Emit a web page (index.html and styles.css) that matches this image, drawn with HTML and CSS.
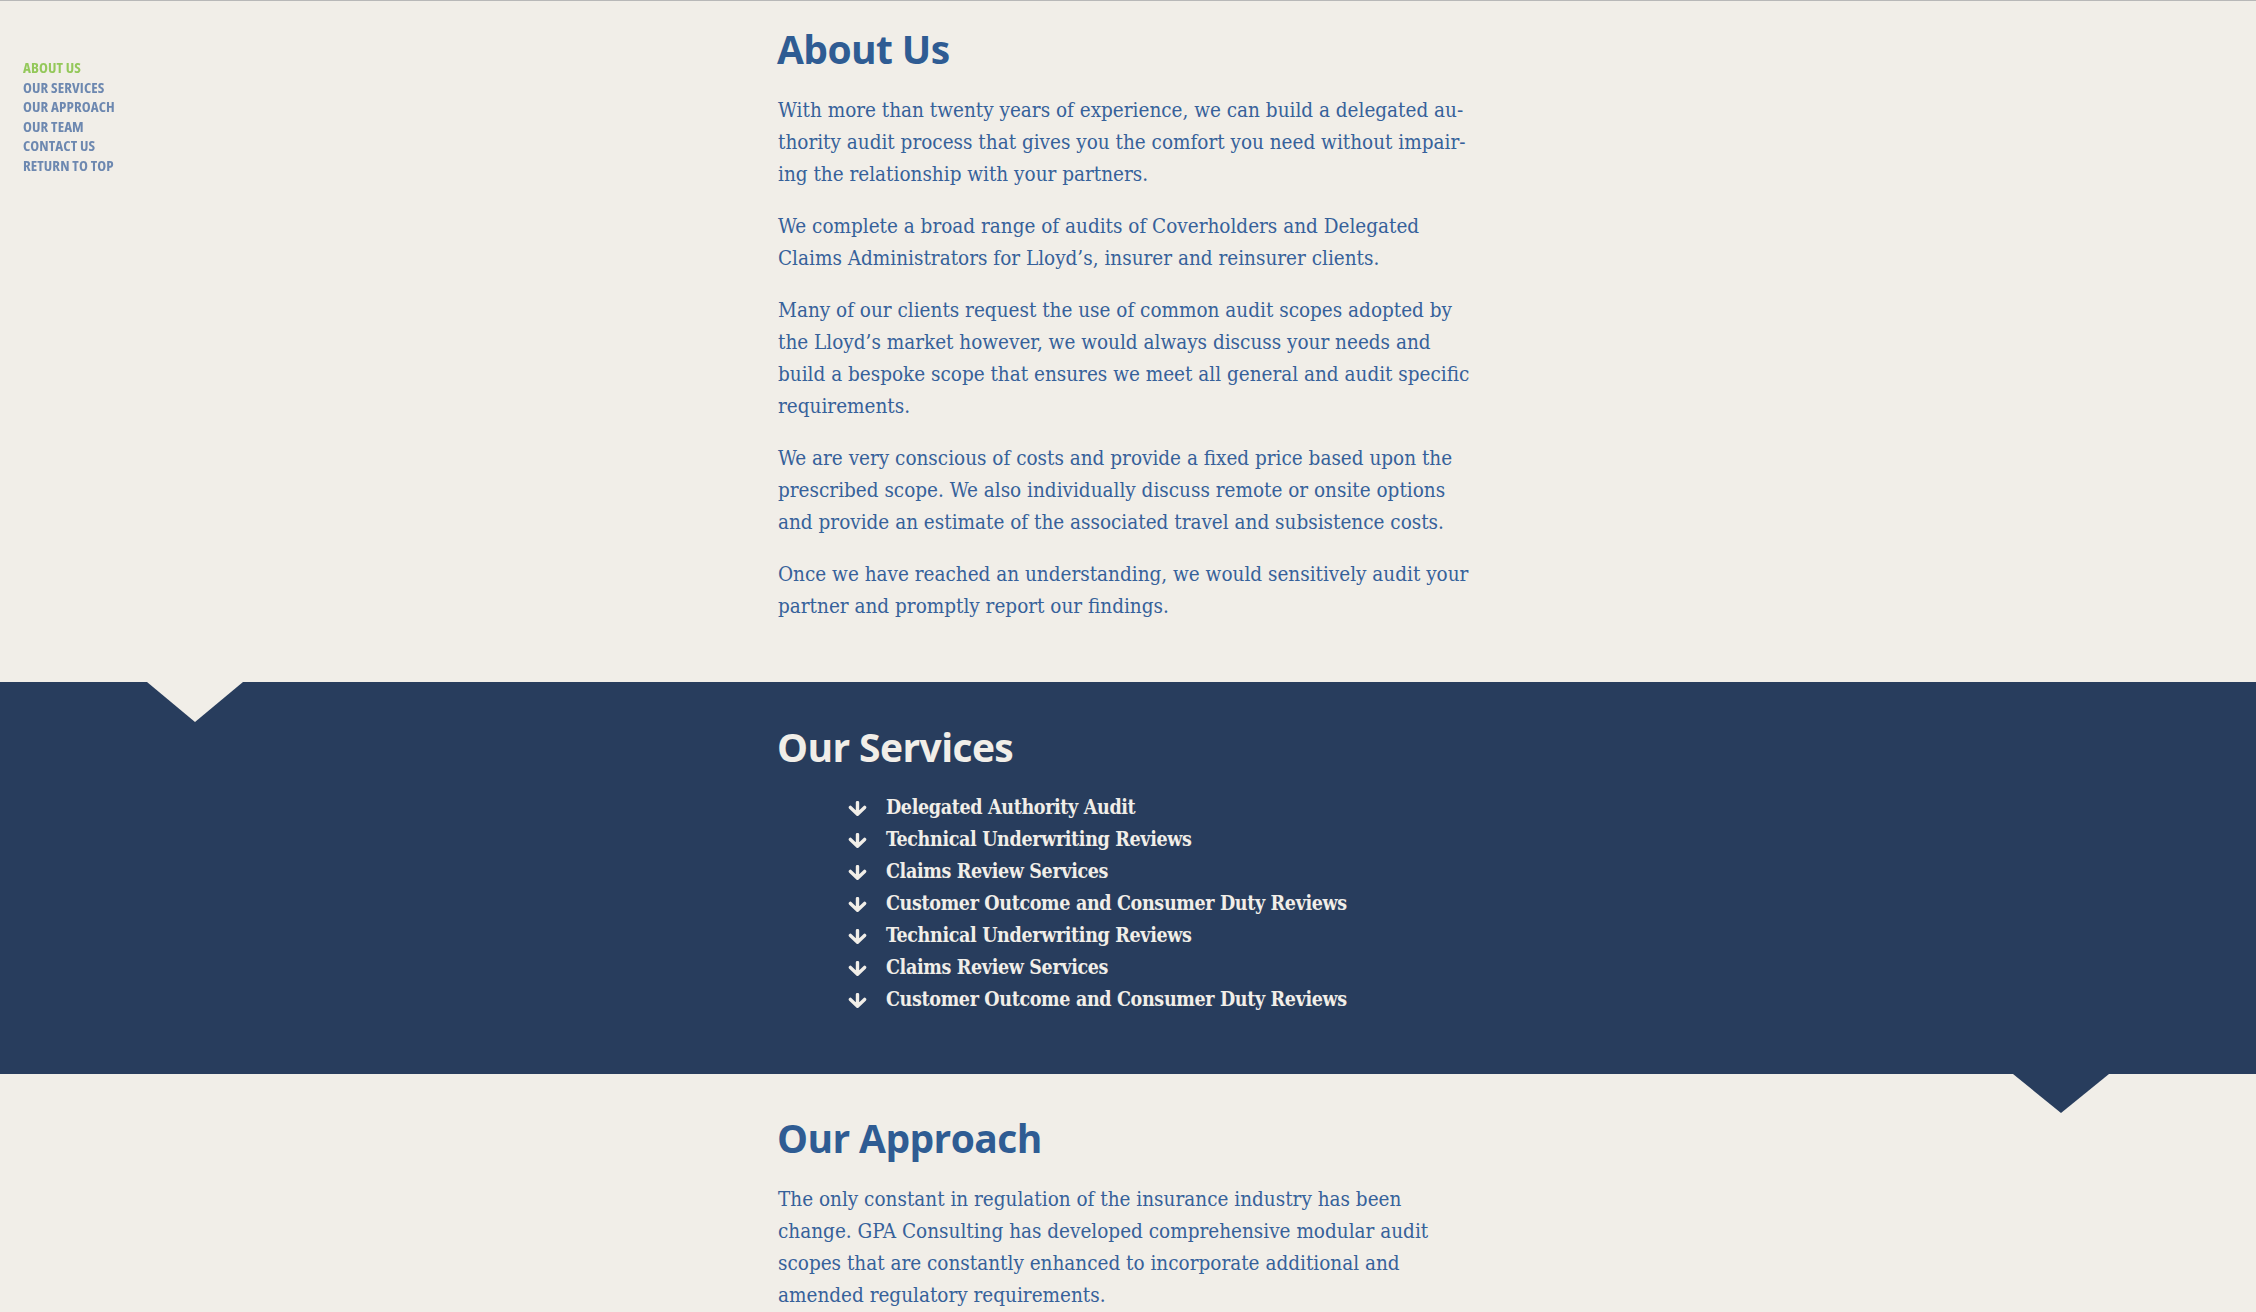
FILE: index.html
```html
<!DOCTYPE html>
<html lang="en">
<head>
<meta charset="utf-8">
<title>GPA Consulting</title>
<link rel="stylesheet" href="styles.css">
</head>
<body>
<nav class="side-nav">
  <a class="side-link active" href="#about">About Us</a>
  <a class="side-link" href="#services">Our Services</a>
  <a class="side-link" href="#approach">Our Approach</a>
  <a class="side-link" href="#team">Our Team</a>
  <a class="side-link" href="#contact">Contact Us</a>
  <a class="side-link" href="#top">Return to Top</a>
</nav>
<main>
  <section class="section about" id="about">
    <div class="inner">
      <h2 class="section-title">About Us</h2>
      <p class="copy">With more than twenty years of experience, we can build a delegated au-<br>thority audit process that gives you the comfort you need without impair-<br>ing the relationship with your partners.</p>
      <p class="copy">We complete a broad range of audits of Coverholders and Delegated<br>Claims Administrators for Lloyd’s, insurer and reinsurer clients.</p>
      <p class="copy">Many of our clients request the use of common audit scopes adopted by<br>the Lloyd’s market however, we would always discuss your needs and<br>build a bespoke scope that ensures we meet all general and audit specific<br>requirements.</p>
      <p class="copy">We are very conscious of costs and provide a fixed price based upon the<br>prescribed scope. We also individually discuss remote or onsite options<br>and provide an estimate of the associated travel and subsistence costs.</p>
      <p class="copy">Once we have reached an understanding, we would sensitively audit your<br>partner and promptly report our findings.</p>
    </div>
  </section>
  <section class="section services" id="services">
    <div class="inner">
      <h2 class="section-title">Our Services</h2>
      <ul class="service-list">
        <li class="service-item"><svg class="arrow" viewBox="0 0 19 15" aria-hidden="true"><path d="M9.5 1.6V13M2.4 6.4L9.5 13.2L16.6 6.4"/></svg><span>Delegated Authority Audit</span></li>
        <li class="service-item"><svg class="arrow" viewBox="0 0 19 15" aria-hidden="true"><path d="M9.5 1.6V13M2.4 6.4L9.5 13.2L16.6 6.4"/></svg><span>Technical Underwriting Reviews</span></li>
        <li class="service-item"><svg class="arrow" viewBox="0 0 19 15" aria-hidden="true"><path d="M9.5 1.6V13M2.4 6.4L9.5 13.2L16.6 6.4"/></svg><span>Claims Review Services</span></li>
        <li class="service-item"><svg class="arrow" viewBox="0 0 19 15" aria-hidden="true"><path d="M9.5 1.6V13M2.4 6.4L9.5 13.2L16.6 6.4"/></svg><span>Customer Outcome and Consumer Duty Reviews</span></li>
        <li class="service-item"><svg class="arrow" viewBox="0 0 19 15" aria-hidden="true"><path d="M9.5 1.6V13M2.4 6.4L9.5 13.2L16.6 6.4"/></svg><span>Technical Underwriting Reviews</span></li>
        <li class="service-item"><svg class="arrow" viewBox="0 0 19 15" aria-hidden="true"><path d="M9.5 1.6V13M2.4 6.4L9.5 13.2L16.6 6.4"/></svg><span>Claims Review Services</span></li>
        <li class="service-item"><svg class="arrow" viewBox="0 0 19 15" aria-hidden="true"><path d="M9.5 1.6V13M2.4 6.4L9.5 13.2L16.6 6.4"/></svg><span>Customer Outcome and Consumer Duty Reviews</span></li>
      </ul>
    </div>
  </section>
  <section class="section approach" id="approach">
    <div class="inner">
      <h2 class="section-title">Our Approach</h2>
      <p class="copy">The only constant in regulation of the insurance industry has been<br>change. GPA Consulting has developed comprehensive modular audit<br>scopes that are constantly enhanced to incorporate additional and<br>amended regulatory requirements.</p>
    </div>
  </section>
</main>
</body>
</html>
```

FILE: styles.css
```css
html, body {
  margin: 0;
  padding: 0;
}

body {
  background: #f1eee8;
  border-top: 1px solid #b8b8b8;
  font-family: "DejaVu Serif Condensed", "DejaVu Serif", serif;
  font-stretch: condensed;
  color: #36619a;
  overflow: hidden;
}

.side-nav {
  position: fixed;
  left: 23px;
  top: 58px;
  display: flex;
  flex-direction: column;
  z-index: 5;
}

.side-link {
  font-family: "Open Sans", "Liberation Sans Narrow", sans-serif;
  font-stretch: 75%;
  font-weight: 700;
  font-size: 15px;
  letter-spacing: 0.1px;
  line-height: 19.5px;
  text-transform: uppercase;
  text-decoration: none;
  color: #6d88b0;
}

.side-link.active {
  color: #94c85a;
}

.section {
  position: relative;
}

.inner {
  max-width: 700px;
  margin: 0 auto;
}

.section-title {
  margin: 0 0 21px -1px;
  font-family: "Open Sans", sans-serif;
  font-stretch: 100%;
  font-weight: 700;
  font-size: 39px;
  letter-spacing: -0.6px;
  line-height: 48px;
  color: #2f5c93;
}

.copy {
  margin: 0 0 20px;
  font-size: 20.5px;
  line-height: 32px;
  white-space: nowrap;
}

.copy:last-child {
  margin-bottom: 0;
}

.about {
  padding: 24px 0 60px;
}

.services {
  background: #283d5d;
  padding: 41px 0 58px;
}

.services .section-title {
  color: #f1eee8;
}

.services::before,
.services::after {
  content: "";
  position: absolute;
  width: 0;
  height: 0;
  border-left: 48px solid transparent;
  border-right: 48px solid transparent;
}

.services::before {
  left: 147px;
  top: 0;
  border-top: 40px solid #f1eee8;
}

.services::after {
  right: 147px;
  top: 100%;
  border-top: 39px solid #283d5d;
}

.service-list {
  list-style: none;
  margin: 0;
  padding: 0 0 0 70px;
}

.service-item {
  display: flex;
  align-items: center;
  gap: 19px;
  font-size: 19.5px;
  font-weight: 700;
  letter-spacing: -0.35px;
  line-height: 32px;
  color: #f1eee8;
  white-space: nowrap;
}

.arrow {
  width: 19px;
  height: 15px;
  flex: none;
  fill: none;
  stroke: #f1eee8;
  stroke-width: 3.4;
  stroke-linecap: round;
  stroke-linejoin: round;
}

.approach {
  padding: 40px 0 60px;
}
```
